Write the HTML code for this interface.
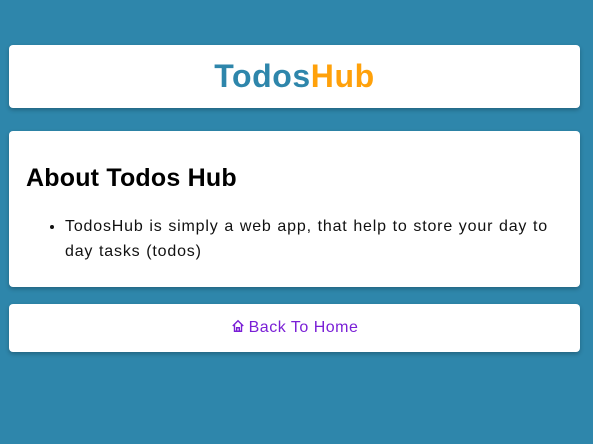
<!DOCTYPE html>
<html><head><style>
body{margin:0;background:#2e86ab;width:593px;height:444px;font-family:"Liberation Sans",sans-serif;position:relative;overflow:hidden}
.card{position:absolute;left:9px;width:571px;background:#fff;border-radius:4px;box-shadow:0 2px 4px rgba(0,0,0,.25)}
.h{top:45px;height:63px;text-align:center;line-height:63px;font-weight:bold;font-size:32px;letter-spacing:0.6px}
.a{top:131px;height:156px}
.b{top:304px;height:48px;text-align:center;line-height:48px;color:#7a1fd6;font-size:16px;letter-spacing:0.5px}
</style></head><body>
<div class="card h"><span style="color:#2e86ab">Todos</span><span style="color:#ffa10a">Hub</span></div>
<div class="card a">
<div style="position:absolute;left:17px;top:33px;font-size:25px;font-weight:bold;color:#000;letter-spacing:0.2px">About Todos Hub</div>
<ul style="position:absolute;left:16px;top:83px;margin:0;padding-left:40px;width:500px;font-size:16px;line-height:25px;color:#111;letter-spacing:0.82px;word-spacing:0.5px">
<li>TodosHub is simply a web app, that help to store your day to day tasks (todos)</li></ul>
</div>
<div class="card b"><svg width="14" height="14" viewBox="0 0 16 16" style="vertical-align:-1px;margin-right:4px"><path d="M2 8 L8 2 L14 8 M4 6.5 V14 H12 V6.5 M6.5 14 V10 H9.5 V14" fill="none" stroke="#7a1fd6" stroke-width="1.6"/></svg>Back To Home</div>
</body></html>
